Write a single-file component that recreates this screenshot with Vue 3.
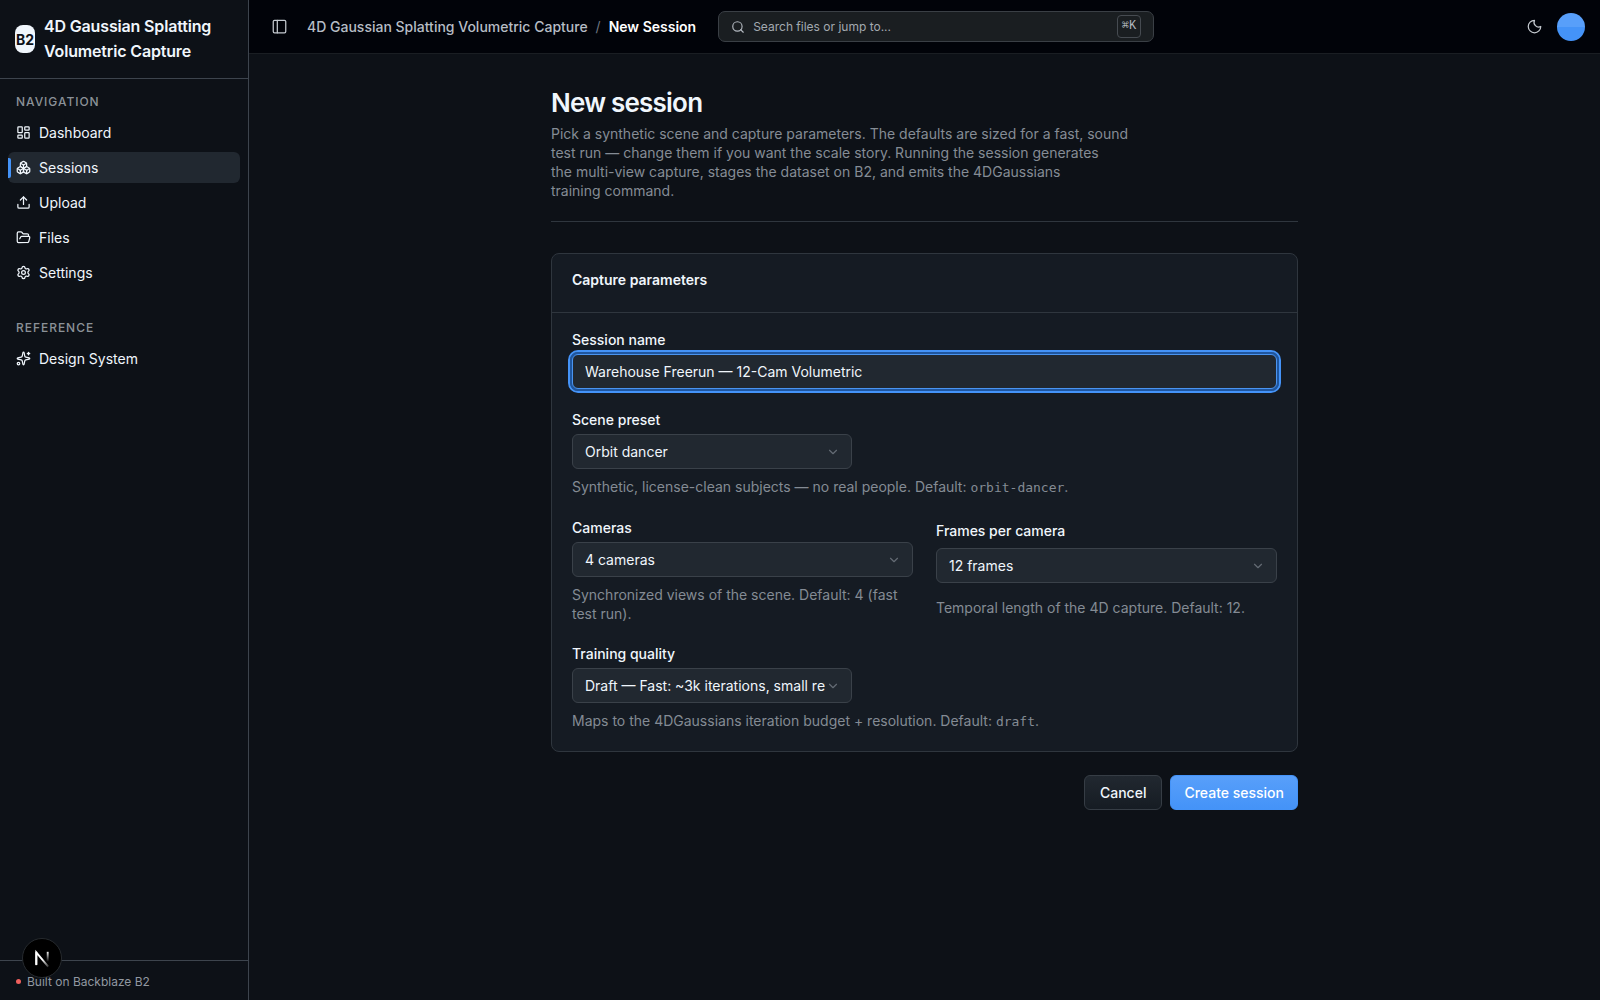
<script setup>
import { ref } from 'vue'

const navigation = [
  { label: 'Dashboard', icon: 'dashboard' },
  { label: 'Sessions', icon: 'boxes', active: true },
  { label: 'Upload', icon: 'upload' },
  { label: 'Files', icon: 'folder' },
  { label: 'Settings', icon: 'settings' },
]
const reference = [{ label: 'Design System', icon: 'sparkles' }]
const groups = [
  { title: 'Navigation', items: navigation },
  { title: 'Reference', items: reference },
]

const icons = {
  dashboard:
    '<rect width="7" height="9" x="3" y="3" rx="1"/><rect width="7" height="5" x="14" y="3" rx="1"/><rect width="7" height="9" x="14" y="12" rx="1"/><rect width="7" height="5" x="3" y="16" rx="1"/>',
  boxes:
    '<path d="M2.97 12.92A2 2 0 0 0 2 14.63v3.24a2 2 0 0 0 .97 1.71l3 1.8a2 2 0 0 0 2.06 0L12 19v-5.5l-5-3-4.03 2.42Z"/><path d="m7 16.5-4.74-2.85"/><path d="m7 16.5 5-3"/><path d="M7 16.5v5.17"/><path d="M12 13.5V19l3.97 2.38a2 2 0 0 0 2.06 0l3-1.8a2 2 0 0 0 .97-1.71v-3.24a2 2 0 0 0-.97-1.71L17 10.5l-5 3Z"/><path d="m17 16.5-5-3"/><path d="m17 16.5 4.74-2.85"/><path d="M17 16.5v5.17"/><path d="M7.97 4.42A2 2 0 0 0 7 6.13v4.37l5 3 5-3V6.13a2 2 0 0 0-.97-1.71l-3-1.8a2 2 0 0 0-2.06 0l-3 1.8Z"/><path d="M12 8 7.26 5.15"/><path d="m12 8 4.74-2.85"/><path d="M12 13.5V8"/>',
  upload:
    '<path d="M12 3v12"/><path d="m17 8-5-5-5 5"/><path d="M21 15v4a2 2 0 0 1-2 2H5a2 2 0 0 1-2-2v-4"/>',
  folder:
    '<path d="m6 14 1.5-2.9A2 2 0 0 1 9.24 10H20a2 2 0 0 1 1.94 2.5l-1.54 6a2 2 0 0 1-1.95 1.5H4a2 2 0 0 1-2-2V5a2 2 0 0 1 2-2h3.9a2 2 0 0 1 1.69.9l.81 1.2a2 2 0 0 0 1.67.9H18a2 2 0 0 1 2 2v2"/>',
  settings:
    '<path d="M9.671 4.136a2.34 2.34 0 0 1 4.659 0 2.34 2.34 0 0 0 3.319 1.915 2.34 2.34 0 0 1 2.33 4.033 2.34 2.34 0 0 0 0 3.831 2.34 2.34 0 0 1-2.33 4.033 2.34 2.34 0 0 0-3.319 1.915 2.34 2.34 0 0 1-4.659 0 2.34 2.34 0 0 0-3.32-1.915 2.34 2.34 0 0 1-2.33-4.033 2.34 2.34 0 0 0 0-3.831A2.34 2.34 0 0 1 6.35 6.051a2.34 2.34 0 0 0 3.319-1.915"/><circle cx="12" cy="12" r="3"/>',
  sparkles:
    '<path d="M11.017 2.814a1 1 0 0 1 1.966 0l1.051 5.558a2 2 0 0 0 1.594 1.594l5.558 1.051a1 1 0 0 1 0 1.966l-5.558 1.051a2 2 0 0 0-1.594 1.594l-1.051 5.558a1 1 0 0 1-1.966 0l-1.051-5.558a2 2 0 0 0-1.594-1.594l-5.558-1.051a1 1 0 0 1 0-1.966l5.558-1.051a2 2 0 0 0 1.594-1.594z"/><path d="M20 2v4"/><path d="M22 4h-4"/><circle cx="4" cy="20" r="2"/>',
}

const name = ref('Warehouse Freerun — 12-Cam Volumetric')
const preset = ref('Orbit dancer')
const cameras = ref('4 cameras')
const frames = ref('12 frames')
const quality = ref('Draft — Fast: ~3k iterations, small resolution')
</script>

<template>
  <div class="app">
    <aside class="sidebar">
      <a class="brand" href="#">
        <span class="logo">B2</span>
        <span class="brand-name">4D Gaussian Splatting Volumetric Capture</span>
      </a>
      <nav class="nav">
        <section v-for="group in groups" :key="group.title" class="nav-group">
          <h2 class="nav-title">{{ group.title }}</h2>
          <a
            v-for="item in group.items"
            :key="item.label"
            href="#"
            class="nav-item"
            :class="{ active: item.active }"
          >
            <svg class="icon" viewBox="0 0 24 24" aria-hidden="true" v-html="icons[item.icon]"></svg>
            <span>{{ item.label }}</span>
          </a>
        </section>
      </nav>
      <footer class="side-footer"><span class="dot"></span>Built on Backblaze B2</footer>
      <button class="dev-badge" type="button" aria-label="Open developer tools">
        <svg viewBox="0 0 40 40" width="38" height="38" fill="none" aria-hidden="true">
          <defs>
            <linearGradient id="diag" x1="21" y1="21" x2="27" y2="29" gradientUnits="userSpaceOnUse">
              <stop stop-color="#fff" /><stop offset="1" stop-color="#fff" stop-opacity="0.2" />
            </linearGradient>
            <linearGradient id="stem" x1="26" y1="13" x2="26" y2="24" gradientUnits="userSpaceOnUse">
              <stop stop-color="#fff" /><stop offset="1" stop-color="#fff" stop-opacity="0" />
            </linearGradient>
          </defs>
          <path d="M14 27V14L26.500 29" stroke="url(#diag)" stroke-width="2" />
          <path d="M14 27.500V13.500" stroke="#fff" stroke-width="2" />
          <path d="M26 13.500V24" stroke="url(#stem)" stroke-width="2" />
        </svg>
      </button>
    </aside>

    <div class="content">
      <header class="topbar">
        <button class="icon-btn" type="button" aria-label="Toggle sidebar">
          <svg class="icon" viewBox="0 0 24 24" aria-hidden="true">
            <rect width="20" height="20" x="2" y="2" rx="2" /><path d="M8.500 2v20" />
          </svg>
        </button>
        <nav class="crumbs" aria-label="Breadcrumb">
          <a href="#">4D Gaussian Splatting Volumetric Capture</a>
          <span class="slash">/</span>
          <span class="current">New Session</span>
        </nav>
        <label class="search">
          <svg class="icon" viewBox="0 0 24 24" aria-hidden="true">
            <circle cx="11" cy="11" r="8" /><path d="m21 21-4.300-4.300" />
          </svg>
          <input type="text" placeholder="Search files or jump to..." aria-label="Search files" />
          <kbd>⌘K</kbd>
        </label>
        <div class="top-actions">
          <button class="icon-btn" type="button" aria-label="Toggle theme">
            <svg class="icon" viewBox="0 0 24 24" aria-hidden="true">
              <path d="M12 2a7.500 7.500 0 0 0 10 10 10 10 0 1 1-10-10Z" />
            </svg>
          </button>
          <button class="avatar" type="button" aria-label="Account"></button>
        </div>
      </header>

      <main class="page">
        <header class="page-head">
          <h1>New session</h1>
          <p>
            Pick a synthetic scene and capture parameters. The defaults are sized for a fast, sound<br />
            test run — change them if you want the scale story. Running the session generates<br />
            the multi-view capture, stages the dataset on B2, and emits the 4DGaussians<br />
            training command.
          </p>
        </header>

        <form @submit.prevent>
          <section class="card">
            <h2 class="card-title">Capture parameters</h2>
            <div class="card-body">
              <div class="field">
                <label for="name">Session name</label>
                <input id="name" v-model="name" class="control focused" type="text" />
              </div>
              <div class="field">
                <label for="preset">Scene preset</label>
                <div class="select short">
                  <select id="preset" v-model="preset" class="control">
                    <option>Orbit dancer</option>
                  </select>
                  <svg class="chevron" viewBox="0 0 24 24" aria-hidden="true"><path d="m6 9 6 6 6-6" /></svg>
                </div>
                <p class="hint">
                  Synthetic, license-clean subjects — no real people. Default: <code>orbit-dancer</code>.
                </p>
              </div>
              <div class="pair">
                <div class="field">
                  <label for="cameras">Cameras</label>
                  <div class="select">
                    <select id="cameras" v-model="cameras" class="control">
                      <option>4 cameras</option>
                    </select>
                    <svg class="chevron" viewBox="0 0 24 24" aria-hidden="true"><path d="m6 9 6 6 6-6" /></svg>
                  </div>
                  <p class="hint">Synchronized views of the scene. Default: 4 (fast test run).</p>
                </div>
                <div class="field">
                  <label for="frames">Frames per camera</label>
                  <div class="select">
                    <select id="frames" v-model="frames" class="control">
                      <option>12 frames</option>
                    </select>
                    <svg class="chevron" viewBox="0 0 24 24" aria-hidden="true"><path d="m6 9 6 6 6-6" /></svg>
                  </div>
                  <p class="hint">Temporal length of the 4D capture. Default: 12.</p>
                </div>
              </div>
              <div class="field">
                <label for="quality">Training quality</label>
                <div class="select short">
                  <select id="quality" v-model="quality" class="control">
                    <option>Draft — Fast: ~3k iterations, small resolution</option>
                  </select>
                  <svg class="chevron" viewBox="0 0 24 24" aria-hidden="true"><path d="m6 9 6 6 6-6" /></svg>
                </div>
                <p class="hint">
                  Maps to the 4DGaussians iteration budget + resolution. Default: <code>draft</code>.
                </p>
              </div>
            </div>
          </section>
          <div class="actions">
            <button class="btn" type="button">Cancel</button>
            <button class="btn primary" type="submit">Create session</button>
          </div>
        </form>
      </main>
    </div>
  </div>
</template>

<style>
body {
  margin: 0;
  background: #0d1117;
}
</style>

<style scoped>
* {
  box-sizing: border-box;
}
.app {
  display: flex;
  min-height: 100vh;
  font-family: Inter, "Liberation Sans", sans-serif;
  font-size: 14px;
  line-height: 19px;
  color: #f0f6fc;
  background: #0d1117;
}
h1,
h2,
p {
  margin: 0;
}
a {
  color: inherit;
  text-decoration: none;
}
button,
input,
select {
  font: inherit;
  color: inherit;
}
.icon {
  width: 15px;
  height: 15px;
  flex: none;
  fill: none;
  stroke: currentColor;
  stroke-width: 2;
  stroke-linecap: round;
  stroke-linejoin: round;
}

.sidebar {
  position: sticky;
  top: 0;
  display: flex;
  flex-direction: column;
  flex: none;
  width: 249px;
  height: 100vh;
  border-right: 1px solid #3d444d;
}
.brand {
  display: flex;
  align-items: center;
  gap: 9px;
  padding: 14px 15px;
  border-bottom: 1px solid #3d444d;
}
.logo {
  display: flex;
  align-items: center;
  justify-content: center;
  width: 20px;
  height: 28px;
  border-radius: 8px;
  background: #f0f6fc;
  color: #0d1117;
  font-size: 14px;
  font-weight: 700;
}
.brand-name {
  flex: 1;
  font-size: 16px;
  line-height: 25px;
  font-weight: 600;
  letter-spacing: -0.01em;
}
.nav {
  flex: 1;
  padding: 8px;
}
.nav-group {
  display: flex;
  flex-direction: column;
  gap: 4px;
  margin-bottom: 25px;
}
.nav-title {
  padding: 6px 8px 2px;
  font-size: 12px;
  line-height: 18px;
  font-weight: 500;
  letter-spacing: 0.08em;
  text-transform: uppercase;
  color: #8b9198;
}
.nav-item {
  position: relative;
  display: flex;
  align-items: center;
  gap: 8px;
  height: 31px;
  padding: 0 8px;
  border-radius: 6px;
}
.nav-item.active {
  background: #212830;
}
.nav-item.active::before {
  content: "";
  position: absolute;
  left: 0;
  top: 6px;
  bottom: 5px;
  width: 3px;
  border-radius: 0 2px 2px 0;
  background: #4493f8;
}
.side-footer {
  display: flex;
  align-items: center;
  gap: 6px;
  height: 40px;
  padding: 2px 16px 0;
  border-top: 1px solid #3d444d;
  font-size: 12px;
  color: #9198a1;
}
.dot {
  width: 5px;
  height: 5px;
  border-radius: 50%;
  background: #f0605d;
}
.dev-badge {
  position: absolute;
  left: 22px;
  bottom: 22px;
  width: 40px;
  height: 40px;
  padding: 0;
  border: 1px solid #262a2e;
  border-radius: 50%;
  background: #000;
}
.dev-badge svg {
  display: block;
}

.content {
  flex: 1;
  min-width: 0;
}
.topbar {
  display: flex;
  align-items: center;
  height: 54px;
  padding: 0 15px 0 23px;
  border-bottom: 1px solid #1a1e23;
  background: #010309;
}
.icon-btn {
  display: flex;
  padding: 0;
  border: 0;
  background: none;
  color: #c4c9cf;
}
.crumbs {
  display: flex;
  gap: 8px;
  margin-left: 20px;
  font-weight: 500;
  color: #b7bdc5;
}
.slash {
  color: #6e7681;
  font-weight: 400;
}
.current {
  font-weight: 600;
  color: #fff;
}
.search {
  display: flex;
  align-items: center;
  gap: 8px;
  width: 436px;
  height: 31px;
  margin-left: 22px;
  padding: 0 12px;
  border: 1px solid #3a3f45;
  border-radius: 7px;
  background: #1a1e21;
  color: #b1b7be;
}
.search .icon {
  width: 14px;
  height: 14px;
}
.search input {
  flex: 1;
  min-width: 0;
  padding: 0;
  border: 0;
  outline: 0;
  background: none;
  font-size: 12px;
}
.search input::placeholder {
  color: #a3a9b0;
  opacity: 1;
}
kbd {
  height: 23px;
  padding: 0 4px;
  border: 1px solid #464b51;
  border-radius: 4px;
  font-family: "Liberation Mono", monospace;
  font-size: 12px;
  line-height: 20px;
}
.top-actions {
  display: flex;
  align-items: center;
  gap: 15px;
  margin-left: auto;
}
.avatar {
  width: 28px;
  height: 28px;
  padding: 0;
  border: 0;
  border-radius: 50%;
  background: linear-gradient(#589ffa 50%, #4493f8 50%);
}

.page {
  max-width: 795px;
  margin: 0 auto;
  padding: 30px 24px;
}
.page-head {
  padding-bottom: 21px;
  border-bottom: 1px solid #2f363e;
}
h1 {
  font-size: 26px;
  line-height: 38px;
  font-weight: 600;
  letter-spacing: -0.03em;
}
.page-head p {
  max-width: 600px;
  margin-top: 2px;
  color: #858c95;
}
.card {
  margin-top: 31px;
  border: 1px solid #2f363e;
  border-radius: 8px;
  background: #151b23;
}
.card-title {
  padding: 16px 20px 23px;
  border-bottom: 1px solid #2f363e;
  font-size: 14px;
  line-height: 19px;
  font-weight: 600;
}
.card-body {
  display: flex;
  flex-direction: column;
  gap: 24px;
  padding: 20px;
}
.field {
  display: grid;
}
.field label {
  align-self: center;
  margin-bottom: 7px;
  line-height: 14px;
  font-weight: 500;
}
.pair {
  display: grid;
  grid-template-columns: 1fr 1fr;
  gap: 23px;
}
.control {
  display: block;
  width: 100%;
  height: 35px;
  padding: 0 12px;
  border: 1px solid #3a4149;
  border-radius: 6px;
  background: #212830;
  appearance: none;
}
.control.focused {
  border-color: #4a94f0;
  outline: 2px solid #4493f8;
  outline-offset: 2px;
  box-shadow: 0 0 0 2px #1f569f;
}
.select {
  position: relative;
}
.select .control {
  padding-right: 26px;
}
.short {
  width: 280px;
}
.chevron {
  position: absolute;
  right: 12px;
  top: 11px;
  width: 14px;
  height: 14px;
  fill: none;
  stroke: #646b74;
  stroke-width: 2;
  stroke-linecap: round;
  stroke-linejoin: round;
  pointer-events: none;
}
.hint {
  margin-top: 8px;
  color: #848b94;
}
code {
  font-family: "DejaVu Sans Mono", monospace;
  font-size: 13px;
}
.actions {
  display: flex;
  justify-content: flex-end;
  gap: 8px;
  margin-top: 23px;
}
.btn {
  height: 35px;
  padding: 0 15px;
  border: 1px solid #363d45;
  border-radius: 6px;
  background: linear-gradient(#212830, #161c23);
  font-weight: 500;
}
.btn.primary {
  padding: 0 13px;
  border-color: #4493f8;
  background: linear-gradient(#589ffa, #4493f8);
  color: #fff;
}
</style>
